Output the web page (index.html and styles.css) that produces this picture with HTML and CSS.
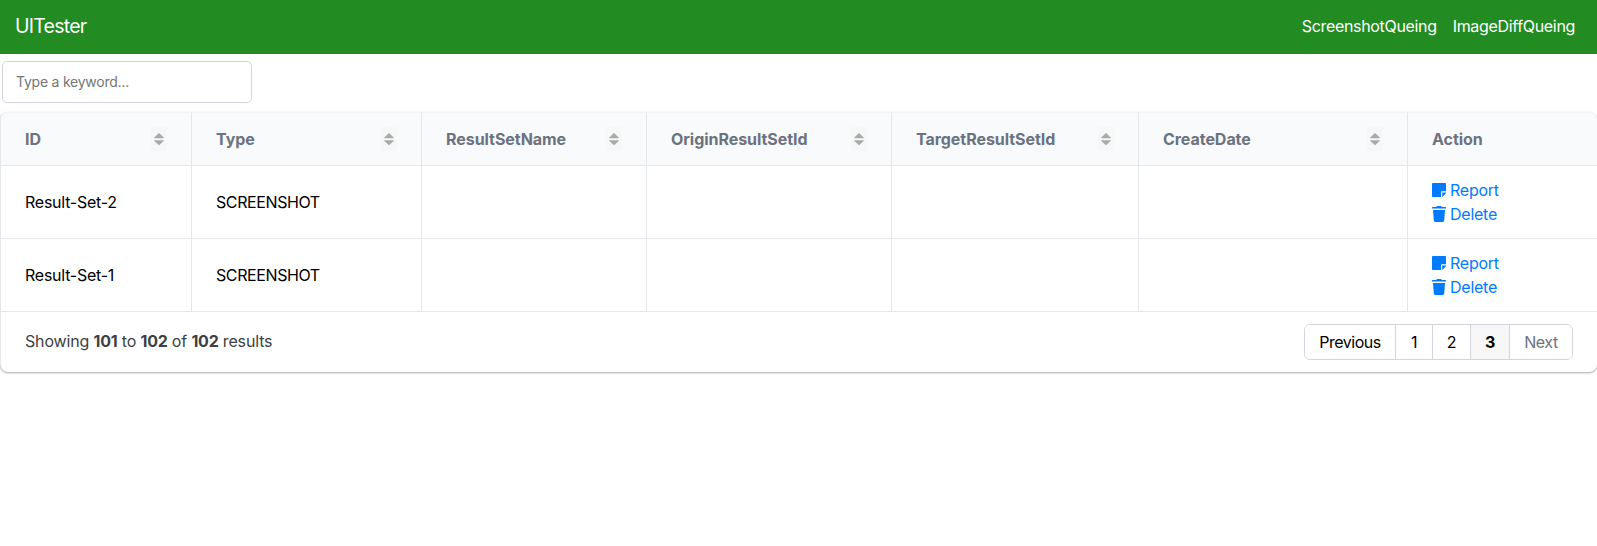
FILE: index.html
```html
<!DOCTYPE html>
<html lang="en">
<head>
<meta charset="utf-8">
<title>UITester</title>
<link rel="stylesheet" href="styles.css">
</head>
<body>
<svg class="defs" width="0" height="0" aria-hidden="true">
  <symbol id="sort" viewBox="0 0 16 24"><path d="M8 6 12.7 10.6V11.2H3.3V10.6ZM3.3 13.3H12.7V13.9L8 18.3 3.3 13.9Z" fill="#a9a9a9"/></symbol>
  <symbol id="note" viewBox="0 0 14 16"><path d="M.8 1H13.2Q14 1 14 1.8V9.200H9.900Q9 9.200 9 10.100V15H.8Q0 15 0 14.2V1.800Q0 1 .8 1ZM10.200 10.500H14V11L10.700 14.800H10.200Z" fill="currentColor"/></symbol>
  <symbol id="trash" viewBox="0 0 14 16"><path d="M.5 1H4.200L4.700.3Q4.900 0 5.300 0H8.700Q9.100 0 9.300.3L9.800 1H13.500Q14 1 14 1.500V2.500H0V1.500Q0 1 .5 1ZM1 4H13L12.200 14.600Q12.100 16 10.700 16H3.300Q1.900 16 1.800 14.600Z" fill="currentColor"/></symbol>
</svg>
<nav class="navbar">
  <a class="brand">UITester</a>
  <div class="links"><a>ScreenshotQueing</a><a>ImageDiffQueing</a></div>
</nav>
<div class="search"><input class="search-input" type="search" placeholder="Type a keyword..."></div>
<div class="wrapper">
  <table class="table">
    <colgroup><col class="c-id"><col class="c-type"><col class="c-name"><col class="c-origin"><col class="c-target"><col class="c-date"><col></colgroup>
    <thead>
      <tr>
        <th><div class="head"><span>ID</span><svg class="sort"><use href="#sort"/></svg></div></th>
        <th><div class="head"><span>Type</span><svg class="sort"><use href="#sort"/></svg></div></th>
        <th><div class="head"><span>ResultSetName</span><svg class="sort"><use href="#sort"/></svg></div></th>
        <th><div class="head"><span>OriginResultSetId</span><svg class="sort"><use href="#sort"/></svg></div></th>
        <th><div class="head"><span>TargetResultSetId</span><svg class="sort"><use href="#sort"/></svg></div></th>
        <th><div class="head"><span>CreateDate</span><svg class="sort"><use href="#sort"/></svg></div></th>
        <th><div class="head"><span>Action</span></div></th>
      </tr>
    </thead>
    <tbody>
      <tr>
        <td>Result-Set-2</td><td class="caps">SCREENSHOT</td><td></td><td></td><td></td><td></td>
        <td><a class="action"><svg class="icon"><use href="#note"/></svg>Report</a><a class="action"><svg class="icon"><use href="#trash"/></svg>Delete</a></td>
      </tr>
      <tr>
        <td>Result-Set-1</td><td class="caps">SCREENSHOT</td><td></td><td></td><td></td><td></td>
        <td><a class="action"><svg class="icon"><use href="#note"/></svg>Report</a><a class="action"><svg class="icon"><use href="#trash"/></svg>Delete</a></td>
      </tr>
    </tbody>
  </table>
  <div class="footer">
    <div class="summary">Showing <b>101</b> to <b>102</b> of <b>102</b> results</div>
    <div class="pages"><button class="page prev">Previous</button><button class="page one">1</button><button class="page two">2</button><button class="page current">3</button><button class="page next">Next</button></div>
  </div>
</div>
</body>
</html>
```

FILE: styles.css
```css
* { box-sizing: border-box; }
body { margin: 0; min-height: 100vh; background: #fff; color: #000; font: 16px/24px Inter, "Liberation Sans", sans-serif; letter-spacing: -0.25px; }
.defs { display: block; }
.navbar { height: 54px; padding: 0 22px 2px 15px; display: flex; align-items: center; justify-content: space-between; background: #228b22; color: #fff; }
.brand { font-size: 19.5px; letter-spacing: -0.75px; }
.links { display: flex; gap: 16px; letter-spacing: -0.33px; }
.search { padding: 7px 2px 9px; height: 58px; }
.search-input { display: block; width: 250px; height: 42px; margin: 0; padding: 0 13px 2px; border: 1px solid #d2d6dc; border-radius: 5px; background: #fff; font: 14px/20px Inter, sans-serif; letter-spacing: -0.23px; outline: none; appearance: none; }
.search-input::placeholder { color: #757575; }
.wrapper { height: 260px; border-radius: 8px; box-shadow: 0 1px 3px rgba(0,0,0,.1), 0 1px 2px rgba(0,0,0,.26); border-left: 1px solid #e5e7eb; background: #fff; }
.table { width: 100%; table-layout: fixed; border-collapse: separate; border-spacing: 0; }
.c-id { width: 191px; }
.c-type { width: 230px; }
.c-name { width: 225px; }
.c-origin { width: 245px; }
.c-target { width: 247px; }
.c-date { width: 269px; }
th, td { padding: 0 24px; text-align: left; border-right: 1px solid #e5e7eb; border-bottom: 1px solid #e5e7eb; }
th:first-child { border-top-left-radius: 7px; }
th:last-child { border-top-right-radius: 8px; }
th:last-child, td:last-child { border-right: 0; }
th { height: 54px; border-top: 1px solid #f3f4f5; background: #f9fafb; color: #6b7280; font-weight: 700; letter-spacing: -0.05px; }
td { height: 73px; }
.caps { letter-spacing: -0.4px; }
.head { display: flex; align-items: center; justify-content: space-between; }
.sort { width: 16px; height: 24px; background: #f6f7f7; }
.action { display: flex; align-items: center; color: #007bff; }
.icon { width: 14px; height: 16px; margin-right: 4px; }
.footer { height: 60px; padding: 0 24px; display: flex; align-items: center; justify-content: space-between; color: #3d4044; }
.summary { padding-bottom: 2px; letter-spacing: -0.15px; }
.summary b { font-weight: 700; letter-spacing: -0.25px; }
.pages { display: flex; height: 36px; border: 1px solid #d2d6dc; border-radius: 6px; overflow: hidden; letter-spacing: -0.48px; }
.page { margin: 0; padding: 0; border: 0; border-right: 1px solid #d2d6dc; background: #fff; color: #000; font: inherit; letter-spacing: inherit; }
.prev { width: 91px; }
.one { width: 37px; }
.two { width: 38px; }
.current { width: 39px; background: #f7f7f7; font-weight: 700; }
.next { width: 62px; border-right: 0; color: #6b7280; }
```
